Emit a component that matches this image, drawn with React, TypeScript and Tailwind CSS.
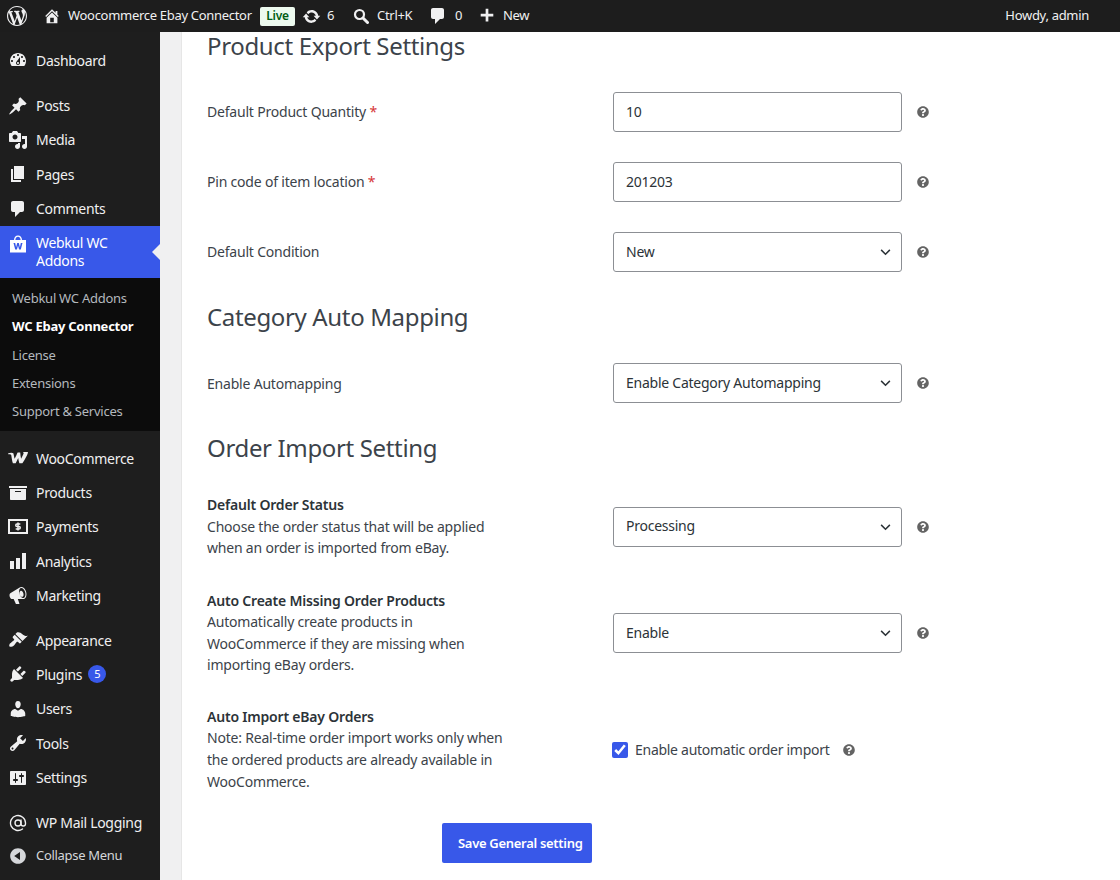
import { ReactNode } from 'react';
import { AtSign } from 'lucide-react';
import { FaQuestionCircle } from 'react-icons/fa';

const font = { sans: '"Noto Sans", sans-serif' };

function Dash({ d, className = 'w-5 h-5' }: { d: string; className?: string }) {
  return (
    <svg viewBox="0 0 20 20" fill="currentColor" className={className}>
      <path d={d} />
    </svg>
  );
}

const P = {
  wp: 'M20 10c0-5.51-4.49-10-10-10C4.48 0 0 4.49 0 10c0 5.52 4.48 10 10 10 5.51 0 10-4.48 10-10zM7.78 15.37L4.37 6.22c.55-.02 1.17-.08 1.17-.08.5-.06.44-1.13-.06-1.11 0 0-1.45.11-2.37.11-.18 0-.37 0-.58-.01C4.12 2.69 6.87 1.11 10 1.11c2.33 0 4.45.87 6.05 2.34-.68-.11-1.65.39-1.65 1.58 0 .74.45 1.36.9 2.1.35.61.55 1.36.55 2.46 0 1.49-1.4 5-1.4 5l-3.03-8.37c.54-.02.82-.17.82-.17.5-.05.44-1.25-.06-1.22 0 0-1.44.12-2.38.12-.87 0-2.33-.12-2.33-.12-.5-.03-.56 1.2-.06 1.22l.92.08 1.26 3.41zM17.41 10c.24-.64.74-1.87.43-4.25.7 1.29 1.05 2.71 1.05 4.25 0 3.29-1.73 6.24-4.4 7.78.97-2.59 1.94-5.2 2.92-7.78zM6.1 18.09C3.12 16.65 1.11 13.53 1.11 10c0-1.3.23-2.48.72-3.59C3.25 10.3 4.67 14.2 6.1 18.09zm4.03-6.63l2.58 6.98c-.86.29-1.76.45-2.71.45-.79 0-1.57-.11-2.29-.33.81-2.38 1.62-4.74 2.42-7.1z',
  home: 'M16 8.5l1.53 1.53-1.06 1.06L10 4.62l-6.47 6.47-1.06-1.06L10 2.5l4 4v-2h2v4zm-6-2.46l6 5.99V18H4v-5.97zM12 17v-5H8v5h4z',
  update: 'M10.2 3.28c3.53 0 6.43 2.61 6.92 6h2.08l-3.5 4-3.5-4h2.32c-.45-1.97-2.21-3.45-4.32-3.45-1.45 0-2.73.71-3.54 1.78L4.95 5.66C6.23 4.2 8.11 3.28 10.2 3.28zm-.4 13.44c-3.52 0-6.43-2.61-6.92-6H.8l3.5-4c1.17 1.33 2.33 2.67 3.5 4H5.48c.45 1.97 2.21 3.45 4.32 3.45 1.45 0 2.73-.71 3.54-1.78l1.71 1.95c-1.28 1.46-3.15 2.38-5.25 2.38z',
  comment: 'M5 2h9c1.1 0 2 .9 2 2v7c0 1.1-.9 2-2 2h-2l-5 5v-5H5c-1.1 0-2-.9-2-2V4c0-1.1.9-2 2-2z',
  plus: 'M17 7.5v3h-5.5V16h-3v-5.5H3v-3h5.5V2h3v5.5H17z',
  dashboard: 'M3.76 16h12.48c1.1-1.37 1.76-3.11 1.76-5 0-4.42-3.58-8-8-8s-8 3.58-8 8c0 1.89.66 3.63 1.76 5zM10 4c.55 0 1 .45 1 1s-.45 1-1 1-1-.45-1-1 .45-1 1-1zM6 6c.55 0 1 .45 1 1s-.45 1-1 1-1-.45-1-1 .45-1 1-1zm8 0c.55 0 1 .45 1 1s-.45 1-1 1-1-.45-1-1 .45-1 1-1zm-5.37 5.55L12 7v6c0 1.1-.9 2-2 2s-2-.9-2-2c0-.57.24-1.08.63-1.45zM4 10c.55 0 1 .45 1 1s-.45 1-1 1-1-.45-1-1 .45-1 1-1zm12 0c.55 0 1 .45 1 1s-.45 1-1 1-1-.45-1-1 .45-1 1-1zm-5 3c0-.55-.45-1-1-1s-1 .45-1 1 .45 1 1 1 1-.45 1-1z',
  posts: 'M10.44 3.02l1.82-1.82 6.36 6.35-1.83 1.82c-1.05-.68-2.48-.57-3.41.36l-.75.75c-.92.93-1.04 2.35-.35 3.41l-1.83 1.82-2.41-2.41-2.8 2.79c-.42.42-3.38 2.71-3.8 2.29s1.86-3.39 2.28-3.81l2.79-2.79L4.1 9.36l1.83-1.82c1.05.69 2.48.57 3.4-.36l.75-.75c.93-.92 1.05-2.35.36-3.41z',
  media: 'M13 11V4c0-.55-.45-1-1-1h-1.67L9 1H5L3.67 3H2c-.55 0-1 .45-1 1v7c0 .55.45 1 1 1h10c.55 0 1-.45 1-1zM7 4.5c1.38 0 2.5 1.12 2.5 2.5S8.38 9.5 7 9.5 4.5 8.38 4.5 7 5.62 4.5 7 4.5zM14 6h5v10.5c0 1.38-1.12 2.5-2.5 2.5S14 17.88 14 16.5s1.12-2.5 2.5-2.5c.17 0 .34.02.5.05V9h-3V6zm-4 8.05V13h2v3.5c0 1.38-1.12 2.5-2.5 2.5S7 17.88 7 16.5 8.12 14 9.5 14c.17 0 .34.02.5.05z',
  pages: 'M6 15V2h10v13H6zm-1 1h8v2H3V5h2v11z',
  products: 'M19 4v2H1V4h18zM2 7h16v10c0 .55-.45 1-1 1H3c-.55 0-1-.45-1-1V7zm11 3V9H7v1h6z',
  analytics: 'M18 18V2h-4v16h4zm-6 0V7H8v11h4zm-6 0v-8H2v8h4z',
  marketing: 'M18.15 5.94c.46 1.62.38 3.22-.02 4.48-.42 1.28-1.26 2.18-2.3 2.48-.16.06-.26.06-.4.06-.06.02-.12.02-.18.02-.06.02-.14.02-.22.02H9.8l1.6 4.6c.02.14-.06.26-.14.34-.08.1-.24.16-.34.16H8.2c-.1 0-.26-.06-.34-.16-.08-.08-.16-.2-.14-.34l-2.1-4.6H4.25c-.5.06-1.08-.18-1.54-.62s-.88-1.08-1.06-1.88c-.24-.8-.2-1.56-.02-2.2.18-.62.58-1.08 1.06-1.3l9-5.4c.1-.06.18-.1.24-.16.06-.04.14-.08.24-.12.16-.08.28-.12.5-.18 1.04-.3 2.24.1 3.22.98.98.86 1.82 2.24 2.26 3.86zm-2.58 5.98c.4-.1.74-.34 1.04-.7.58-.7.86-1.76.86-3.04-.02-.64-.1-1.3-.28-1.98-.34-1.36-1.02-2.5-1.78-3.24s-1.68-1.1-2.46-.88c-.82.22-1.4.96-1.7 2-.32 1.04-.28 2.36.06 3.72.38 1.36 1 2.5 1.8 3.24.78.74 1.62 1.1 2.46.88zm-2.54-7.08c.22-.04.42-.02.62.04.38.16.76.48 1.1 1s.58 1.14.7 1.8c.16.64.16 1.3.02 1.86-.14.52-.42 1.02-.8 1.24-.18.1-.44.14-.68.14-.18-.02-.38-.06-.56-.14-.4-.16-.8-.48-1.1-.94-.36-.5-.6-1.14-.76-1.8-.14-.66-.16-1.34-.02-1.9.14-.56.44-.94.88-1.1.18-.08.42-.14.6-.2z',
  appearance: 'M14.48 11.06L7.41 3.99l1.5-1.5c.5-.56 2.3-.47 3.51.32 1.21.8 1.43 1.28 2.91 2.1 1.18.64 2.45 1.26 4.45.85zm-.71.71L6.7 4.7 4.93 6.47c-.39.39-.39 1.02 0 1.41l1.06 1.06c.39.39.39 1.03 0 1.42-.6.6-1.43 1.11-2.21 1.69-.35.26-.7.53-1.01.84C1.43 13.23.75 15.72 1.53 16.5c.78.78 3.27.1 4.6-1.25.31-.31.58-.66.84-1.01.58-.78 1.09-1.61 1.69-2.21.39-.39 1.03-.39 1.42 0l1.06 1.06c.39.39 1.02.39 1.41 0z',
  plugins: 'M13.11 4.36L9.87 7.6 8 5.73l3.24-3.24c.35-.34 1.05-.2 1.56.32.52.51.66 1.21.31 1.55zm-8 1.77l.91-1.12 9.01 9.01-1.19.84c-.71.71-2.63 1.16-3.82 1.16H6.14L4.9 17.26c-.59.59-1.54.59-2.12 0-.59-.58-.59-1.53 0-2.12l1.24-1.24v-3.88c0-1.13.4-3.19 1.09-3.89zm7.26 3.97l3.24-3.24c.34-.35 1.04-.21 1.55.31.52.51.66 1.21.31 1.55l-3.24 3.25z',
  users: 'M10 9.25c-2.27 0-2.73-3.44-2.73-3.44C7 4.02 7.82 2 9.97 2c2.16 0 2.98 2.02 2.71 3.81 0 0-.41 3.44-2.68 3.44zm0 2.57L12.72 10c2.39 0 4.52 2.33 4.52 4.53v2.49s-3.65 1.13-7.24 1.13c-3.65 0-7.24-1.13-7.24-1.13v-2.49c0-2.25 1.94-4.48 4.47-4.48z',
  tools: 'M16.68 9.77c-1.34 1.34-3.3 1.67-4.95.99l-5.41 6.52c-.99.99-2.59.99-3.58 0s-.99-2.59 0-3.57l6.52-5.42c-.68-1.65-.35-3.61.99-4.95 1.28-1.28 3.12-1.62 4.72-1.06l-2.89 2.89 2.82 2.82 2.86-2.87c.53 1.58.18 3.39-1.08 4.65zM3.81 16.21c.4.39 1.04.39 1.43 0 .4-.4.4-1.04 0-1.43-.39-.4-1.03-.4-1.43 0-.39.39-.39 1.03 0 1.43z',
  settings: 'M18 16V4c0-.55-.45-1-1-1H3c-.55 0-1 .45-1 1v12c0 .55.45 1 1 1h14c.55 0 1-.45 1-1zM8 11h1c.55 0 1 .45 1 1s-.45 1-1 1H8v1.5c0 .28-.22.5-.5.5s-.5-.22-.5-.5V13H6c-.55 0-1-.45-1-1s.45-1 1-1h1V5.5c0-.28.22-.5.5-.5s.5.22.5.5V11zm5-2h-1c-.55 0-1-.45-1-1s.45-1 1-1h1V5.5c0-.28.22-.5.5-.5s.5.22.5.5V7h1c.55 0 1 .45 1 1s-.45 1-1 1h-1v5.5c0 .28-.22.5-.5.5s-.5-.22-.5-.5V9z',
  collapse: 'M10 2.16c4.33 0 7.84 3.51 7.84 7.84s-3.51 7.84-7.84 7.84S2.16 14.33 2.16 10 5.71 2.16 10 2.16zm2 11.72V6.12L6.18 9.97z',
};

function WebkulIcon() {
  return (
    <svg viewBox="0 0 20 20" className="w-5 h-5">
      <path fill="currentColor" d="M2 6h16v12.500H2zM6 6c0-2.600 1.600-4.500 4-4.500s4 1.900 4 4.500h-1.400c0-1.900-1-3.200-2.600-3.200S7.400 4.100 7.400 6z" />
      <path fill="#3858e9" d="M5.500 9h1.700l.9 4.200L9.200 9h1.600l1.100 4.200.9-4.200h1.700l-1.700 6.500h-1.700L10 11.500l-1.100 4H7.200z" />
    </svg>
  );
}

function WooIcon() {
  return (
    <svg viewBox="0 0 24 14" fill="currentColor" className="w-[21px] h-[12px]">
      <path d="M0 1.500C2.500.500 5 .500 6 1.500c.8 3 1 5 1.500 6.500 1.500-3 2.500-5.500 3.500-7.500h3c.2 2.500.5 5 1 7.500 1.500-3 3-6 3-6.500 0-.8-.5-1-1-1.500h6c.5 1.500-4 10-6.500 13h-3.500c-.8-2-1-4-1.300-6-1 2-2 4.500-3 6H5.500C4.500 11 4 6 3.500 3.500 3 2.500 1 2.500 0 2.500z" />
    </svg>
  );
}

function PaymentsIcon() {
  return (
    <svg viewBox="0 0 20 15" fill="none" className="w-5 h-[15px]">
      <rect x="1" y="1" width="18" height="13" stroke="currentColor" strokeWidth="2" />
      <path d="M12.300 5H9a1.100 1.100 0 0 0 0 2.500h2a1.100 1.100 0 0 1 0 2.500H7.700M10 3.500v8" stroke="currentColor" strokeWidth="1.500" />
    </svg>
  );
}

type MenuItem = { label: string; icon: ReactNode; badge?: string };

const dash = (d: string) => <Dash d={d} />;

const groupOne: MenuItem[] = [
  { label: 'Posts', icon: dash(P.posts) },
  { label: 'Media', icon: dash(P.media) },
  { label: 'Pages', icon: dash(P.pages) },
  { label: 'Comments', icon: dash(P.comment) },
];

const groupTwo: MenuItem[] = [
  { label: 'WooCommerce', icon: <WooIcon /> },
  { label: 'Products', icon: dash(P.products) },
  { label: 'Payments', icon: <PaymentsIcon /> },
  { label: 'Analytics', icon: dash(P.analytics) },
  { label: 'Marketing', icon: dash(P.marketing) },
];

const groupThree: MenuItem[] = [
  { label: 'Appearance', icon: dash(P.appearance) },
  { label: 'Plugins', icon: dash(P.plugins), badge: '5' },
  { label: 'Users', icon: dash(P.users) },
  { label: 'Tools', icon: dash(P.tools) },
  { label: 'Settings', icon: dash(P.settings) },
];

const subItems = ['Webkul WC Addons', 'WC Ebay Connector', 'License', 'Extensions', 'Support & Services'];

function MenuRow({ item }: { item: MenuItem }) {
  return (
    <div className="h-[34.4px] flex items-center text-[14px] tracking-[-0.3px] text-[#f0f0f1]">
      <span className="w-9 flex-shrink-0 flex justify-center">{item.icon}</span>
      <span>{item.label}</span>
      {item.badge && (
        <span className="ml-[6px] w-[18px] h-[18px] rounded-full bg-[#3858e9] text-white text-[11px] flex items-center justify-center">
          {item.badge}
        </span>
      )}
    </div>
  );
}

function Sidebar() {
  return (
    <aside className="w-40 flex-shrink-0 bg-[#1e1e1e] pt-[11px]">
      <MenuRow item={{ label: 'Dashboard', icon: dash(P.dashboard) }} />
      <div className="mt-[11px]">
        {groupOne.map((item) => <MenuRow key={item.label} item={item} />)}
      </div>
      <div className="relative h-[52px] bg-[#3858e9] text-white text-[14px] tracking-[-0.3px] leading-[18px] flex pt-2">
        <span className="w-9 flex-shrink-0 flex justify-center text-white"><WebkulIcon /></span>
        <span className="w-[100px]">Webkul WC Addons</span>
        <span className="absolute right-0 top-[18px] border-y-[8px] border-y-transparent border-r-[8px] border-r-[#f0f0f1]" />
      </div>
      <div className="bg-[#0c0c0c] pt-[7px] pb-[5px]">
        {subItems.map((s) => (
          <div
            key={s}
            className={`h-[28.2px] flex items-center pl-3 text-[13px] tracking-[-0.25px] ${s === 'WC Ebay Connector' ? 'font-bold text-white' : 'text-[#b4b9be]'}`}
          >
            {s}
          </div>
        ))}
      </div>
      <div className="mt-[10px]">
        {groupTwo.map((item) => <MenuRow key={item.label} item={item} />)}
      </div>
      <div className="mt-[10px]">
        {groupThree.map((item) => <MenuRow key={item.label} item={item} />)}
      </div>
      <div className="mt-[11px]">
        <MenuRow item={{ label: 'WP Mail Logging', icon: <AtSign className="w-[18px] h-[18px]" strokeWidth={1.8} /> }} />
        <div className="h-[32px] flex items-center text-[13px] tracking-[-0.3px] text-[#d5d7da]">
          <span className="w-9 flex-shrink-0 flex justify-center"><Dash d={P.collapse} /></span>
          Collapse Menu
        </div>
      </div>
    </aside>
  );
}

function AdminBar() {
  return (
    <header className="relative z-10 h-8 flex-shrink-0 bg-[#1d1d1d] text-[#f0f0f1] text-[13px] tracking-[-0.3px] flex items-center">
      <span className="ml-[7px] w-5 h-5"><Dash d={P.wp} /></span>
      <span className="ml-[16px]"><Dash d={P.home} className="w-[18px] h-[18px]" /></span>
      <span className="ml-[7px] w-[192px] whitespace-nowrap">Woocommerce Ebay Connector</span>
      <span className="w-[35px] h-[19px] rounded-[2px] bg-[#edfaef] text-[#005c12] font-semibold text-[12px] flex items-center justify-center">Live</span>
      <span className="ml-[7px]"><Dash d={P.update} className="w-[19px] h-[19px]" /></span>
      <span className="ml-[6px] w-[26px]">6</span>
      <svg viewBox="0 0 16 16" fill="none" stroke="currentColor" className="w-4 h-4">
        <circle cx="6.500" cy="6.500" r="4.500" strokeWidth="2.200" />
        <path d="M10 10l4.500 4.500" strokeWidth="3" strokeLinecap="round" />
      </svg>
      <span className="ml-[8px] w-[51px]">Ctrl+K</span>
      <Dash d={P.comment} className="w-5 h-5" />
      <span className="ml-[7px] w-[23px]">0</span>
      <Dash d={P.plus} className="w-[18px] h-[18px]" />
      <span className="ml-[7px]">New</span>
      <span className="ml-auto mr-[31px]">Howdy, admin</span>
    </header>
  );
}

function Help() {
  return <FaQuestionCircle className="w-3 h-3 text-[#646464]" />;
}

const controlClass =
  'w-[289px] h-10 border border-[#8c8f94] rounded-[3px] bg-white pl-3 pb-[2px] text-[14px] tracking-[-0.25px] text-[#2c3338] outline-none';

function TextControl({ value }: { value: string }) {
  return <input type="text" defaultValue={value} className={controlClass} />;
}

function SelectControl({ value }: { value: string }) {
  return (
    <div className="relative w-[289px] h-10">
      <select defaultValue={value} className={`${controlClass} appearance-none`}>
        <option>{value}</option>
      </select>
      <svg viewBox="0 0 12 8" fill="none" stroke="#2c3338" strokeWidth="1.700" className="absolute right-[11px] top-[17px] w-[11px] h-[7px]">
        <path d="M1 1l5 5 5-5" />
      </svg>
    </div>
  );
}

function Row({ label, children }: { label: ReactNode; children: ReactNode }) {
  return (
    <div className="flex items-center">
      <div className="w-[406px] flex-shrink-0 text-[14px] tracking-[-0.2px] text-[#3c434a]">{label}</div>
      {children}
      <span className="ml-[15px]"><Help /></span>
    </div>
  );
}

function Required({ text }: { text: string }) {
  return <span className="block pb-[2px]">{text} <span className="text-[#d63638]">*</span></span>;
}

function Described({ title, text }: { title: string; text: string }) {
  return (
    <div className="w-[300px] pb-px">
      <div className="font-semibold leading-[21.5px] text-[#2c3338]">{title}</div>
      <div className="leading-[21.6px]">{text}</div>
    </div>
  );
}

function Heading({ children }: { children: ReactNode }) {
  return <h2 className="h-[31px] text-[24px] tracking-[-0.35px] leading-[29px] text-[#3c434a]">{children}</h2>;
}

export default function App() {
  return (
    <div className="w-[1120px] h-[880px] overflow-hidden flex flex-col bg-[#f0f0f1]" style={{ fontFamily: font.sans }}>
      <AdminBar />
      <div className="flex flex-1 min-h-0">
        <Sidebar />
        <main className="ml-[21px] flex-1 bg-white pl-[25px] -mt-px flex flex-col gap-[30px] border-l border-[#e6e6e6]">
          <Heading>Product Export Settings</Heading>
          <Row label={<Required text="Default Product Quantity" />}><TextControl value="10" /></Row>
          <Row label={<Required text="Pin code of item location" />}><TextControl value="201203" /></Row>
          <Row label={<span className="block pb-[2px]">Default Condition</span>}><SelectControl value="New" /></Row>
          <Heading>Category Auto Mapping</Heading>
          <Row label="Enable Automapping"><SelectControl value="Enable Category Automapping" /></Row>
          <Heading>Order Import Setting</Heading>
          <Row label={<Described title="Default Order Status" text="Choose the order status that will be applied when an order is imported from eBay." />}>
            <SelectControl value="Processing" />
          </Row>
          <Row label={<Described title="Auto Create Missing Order Products" text="Automatically create products in WooCommerce if they are missing when importing eBay orders." />}>
            <SelectControl value="Enable" />
          </Row>
          <div className="-mt-px flex items-center">
            <div className="w-[405px] flex-shrink-0 text-[14px] tracking-[-0.2px] text-[#3c434a]">
              <Described title="Auto Import eBay Orders" text="Note: Real-time order import works only when the ordered products are already available in WooCommerce." />
            </div>
            <input type="checkbox" defaultChecked className="w-4 h-4 accent-[#3858e9]" />
            <span className="ml-[7px] text-[14px] tracking-[-0.28px] text-[#3c434a]">Enable automatic order import</span>
            <span className="ml-[14px]"><Help /></span>
          </div>
          <div>
            <button className="ml-[235px] w-[150px] h-10 rounded-[2px] bg-[#3858e9] text-white text-[13px] tracking-[-0.3px] font-semibold text-left pl-4">
              Save General setting
            </button>
          </div>
        </main>
      </div>
    </div>
  );
}
